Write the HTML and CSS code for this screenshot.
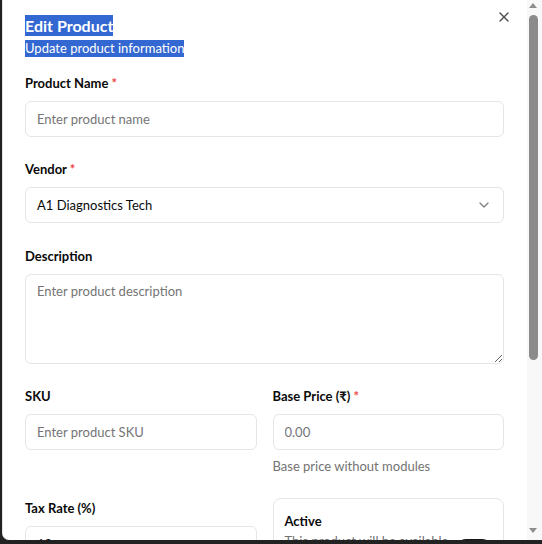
FILE: index.html
```html
<!DOCTYPE html>
<html lang="en">
<head>
<meta charset="utf-8">
<title>Edit Product</title>
<link rel="stylesheet" href="styles.css">
</head>
<body>
<div class="dialog" role="dialog">
  <div class="scroll">
    <button class="close" type="button" aria-label="Close">
      <svg viewBox="0 0 24 24" width="16" height="16" fill="none" stroke="currentColor" stroke-width="2" stroke-linecap="round" stroke-linejoin="round"><path d="M18 6 6 18"/><path d="m6 6 12 12"/></svg>
    </button>
    <div class="content">
      <header class="head">
        <h2 class="title"><span class="sel">Edit Product</span></h2>
        <p class="sub"><span class="sel">Update product information</span></p>
      </header>
      <form class="form">
        <div class="field">
          <label class="label">Product Name <span class="req">*</span></label>
          <input class="input" type="text" placeholder="Enter product name">
        </div>
        <div class="field">
          <label class="label">Vendor <span class="req">*</span></label>
          <button class="input select" type="button">
            <span>A1 Diagnostics Tech</span>
            <svg class="chev" viewBox="0 0 24 24" width="16" height="16" fill="none" stroke="currentColor" stroke-width="2" stroke-linecap="round" stroke-linejoin="round"><path d="m6 9 6 6 6-6"/></svg>
          </button>
        </div>
        <div class="field field-desc">
          <label class="label">Description</label>
          <textarea class="input textarea" placeholder="Enter product description"></textarea>
        </div>
        <div class="grid2">
          <div class="field">
            <label class="label">SKU</label>
            <input class="input" type="text" placeholder="Enter product SKU">
          </div>
          <div class="field">
            <label class="label">Base Price (₹) <span class="req">*</span></label>
            <input class="input" type="text" placeholder="0.00">
            <p class="hint">Base price without modules</p>
          </div>
        </div>
        <div class="grid2">
          <div class="field">
            <label class="label">Tax Rate (%)</label>
            <input class="input" type="text" value="18">
          </div>
          <div class="switchbox">
            <div class="sw-text">
              <div class="sw-title">Active</div>
              <div class="sw-desc">This product will be available for purchase and visible to customers</div>
            </div>
            <span class="switch"><span class="knob"></span></span>
          </div>
        </div>
        <div class="footer">
          <button class="btn outline" type="button">Cancel</button>
          <button class="btn primary" type="button">Update Product</button>
        </div>
      </form>
    </div>
  </div>
  <div class="scrollbar" aria-hidden="true">
    <span class="arrow up"></span>
    <span class="thumb"></span>
    <span class="spacer"></span>
    <span class="arrow down"></span>
  </div>
</div>
</body>
</html>
```
FILE: styles.css
```css
* { box-sizing: border-box; }
html, body { height: 100%; }
body {
  margin: 0;
  padding-left: 2px;
  background: #222222;
  overflow: hidden;
  font-family: Lato, "Noto Sans", sans-serif;
  color: #0a0a0a;
}
.dialog {
  display: flex;
  width: 540px;
  height: 540px;
  background: #ffffff;
  border-left: 1px solid #e2e2e2;
  border-bottom-left-radius: 7px;
  overflow: hidden;
}
.scroll {
  position: relative;
  flex: 1;
  min-width: 0;
  overflow: hidden;
}
.scrollbar {
  flex: none;
  width: 15px;
  background: #f8f8f8;
  display: flex;
  flex-direction: column;
  align-items: flex-start;
  padding: 3px 0 7px 2px;
}
.arrow {
  display: block;
  width: 0;
  height: 0;
  border-left: 4px solid transparent;
  border-right: 4px solid transparent;
}
.arrow.up { border-bottom: 5px solid #8e8e8e; }
.arrow.down { border-top: 5px solid #8e8e8e; }
.thumb {
  display: block;
  width: 9px;
  height: 345px;
  margin-top: 7px;
  border-radius: 5px;
  background: #8b8b8b;
}
.spacer { flex: 1; }
.close {
  position: absolute;
  top: 9px;
  right: 15px;
  width: 16px;
  height: 16px;
  padding: 0;
  border: 0;
  background: none;
  color: #0a0a0a;
  opacity: 0.72;
  display: flex;
}
.content {
  padding: 15px 23px 24px 22px;
}
.head { display: flex; flex-direction: column; gap: 4px; }
.title, .sub { margin: 0; display: flex; }
.sel { display: block; background: #3367d1; color: #ffffff; }
.title .sel { font-size: 16px; font-weight: 700; line-height: 21px; }
.sub .sel { font-size: 13px; font-weight: 400; line-height: 17px; }
.form {
  margin-top: 16px;
  display: flex;
  flex-direction: column;
  gap: 22px;
}
.field { display: flex; flex-direction: column; }
.field-desc { margin-top: 1px; }
.label {
  font-size: 13px;
  font-weight: 700;
  line-height: 20px;
  margin-bottom: 8px;
}
.req { color: #ef4444; }
.input {
  width: 100%;
  height: 36px;
  border: 1px solid #e5e5e5;
  border-radius: 6px;
  background: #ffffff;
  padding: 0 11px;
  font: 400 13px/20px Lato, "Noto Sans", sans-serif;
  color: #0a0a0a;
  outline: none;
}
.input::placeholder { color: #757575; }
.select {
  display: flex;
  align-items: center;
  justify-content: space-between;
  text-align: left;
  padding-right: 11px;
}
.chev { color: #0a0a0a; opacity: 0.5; flex: none; }
.textarea {
  height: 90px;
  padding: 6px 11px;
  resize: vertical;
}
.grid2 {
  display: grid;
  grid-template-columns: 1fr 1fr;
  column-gap: 16px;
  align-items: start;
}
.hint {
  margin: 6px 0 0;
  font-size: 13px;
  line-height: 20px;
  color: #737373;
}
.switchbox {
  display: flex;
  align-items: center;
  justify-content: space-between;
  gap: 3px;
  border: 1px solid #e5e5e5;
  border-radius: 8px;
  padding: 12px 11px;
}
.sw-text { min-width: 0; }
.sw-title { font-size: 13px; font-weight: 700; line-height: 20px; }
.sw-desc { font-size: 13px; line-height: 20px; color: #737373; }
.switch {
  flex: none;
  width: 36px;
  height: 20px;
  margin-bottom: 4px;
  border-radius: 10px;
  background: #171717;
  display: flex;
  align-items: center;
  justify-content: flex-end;
  padding: 2px;
}
.knob { width: 16px; height: 16px; border-radius: 50%; background: #ffffff; }
.footer {
  display: flex;
  justify-content: flex-end;
  gap: 8px;
  padding-top: 8px;
}
.btn {
  height: 36px;
  padding: 0 16px;
  border-radius: 6px;
  font: 600 13px/20px Lato, "Noto Sans", sans-serif;
}
.outline { background: #fff; border: 1px solid #e5e5e5; color: #0a0a0a; }
.primary { background: #171717; border: 1px solid #171717; color: #fafafa; }
```
